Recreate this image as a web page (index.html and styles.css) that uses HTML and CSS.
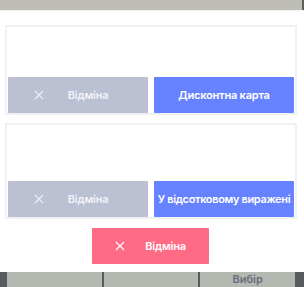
FILE: index.html
```html
<!DOCTYPE html>
<html lang="uk">
<head>
    <meta charset="UTF-8">
    <meta name="viewport" content="width=device-width, initial-scale=1.0">
    <title>Знижка</title>
    <link rel="stylesheet" href="styles.css">
</head>
<body>
    <div class="topbar"></div>
    <div class="sheet">
        <div class="card">
            <div class="card-space"></div>
            <div class="actions">
                <button class="btn btn-muted">
                    <svg class="x-icon" viewBox="0 0 10 10"><path d="M1 1L9 9M9 1L1 9"/></svg>
                    <span>Відміна</span>
                </button>
                <button class="btn btn-primary">Дисконтна карта</button>
            </div>
        </div>
        <div class="card card-tall">
            <div class="card-space"></div>
            <div class="actions">
                <button class="btn btn-muted">
                    <svg class="x-icon" viewBox="0 0 10 10"><path d="M1 1L9 9M9 1L1 9"/></svg>
                    <span>Відміна</span>
                </button>
                <button class="btn btn-primary btn-long">У відсотковому виражені</button>
            </div>
        </div>
        <div class="cancel-row">
            <button class="btn btn-danger">
                <svg class="x-icon" viewBox="0 0 10 10"><path d="M1 1L9 9M9 1L1 9"/></svg>
                <span>Відміна</span>
            </button>
        </div>
    </div>
    <div class="bottombar">
        <div class="tab"></div>
        <div class="tab"></div>
        <div class="tab">Вибір</div>
    </div>
</body>
</html>
```

FILE: styles.css
```css
body {
    margin: 0;
    font-family: 'Inter', 'Noto Sans', sans-serif;
    background: #fff;
    width: 304px;
    height: 287px;
    overflow: hidden;
}
.topbar {
    height: 10px;
    background: #bdbdb5;
    border-right: 2px solid #5a5f60;
    box-shadow: 0 1px 1px rgba(0, 0, 0, 0.06);
}
.sheet {
    padding: 15px 7px 0 5px;
}
.card {
    border: 2px solid #eff0f4;
    padding: 0 1px;
    margin-bottom: 8px;
}
.card-space {
    height: 50px;
}
.card-tall .card-space {
    height: 56px;
}
.actions {
    display: flex;
    gap: 6px;
}
.btn {
    height: 36px;
    border: none;
    border-radius: 1px;
    color: #fff;
    font-family: inherit;
    font-size: 11px;
    font-weight: 600;
    letter-spacing: -0.2px;
    display: flex;
    align-items: center;
    justify-content: center;
    padding: 0;
    white-space: nowrap;
    overflow: hidden;
}
.actions .btn {
    width: 140px;
}
.btn-long {
    letter-spacing: -0.35px;
}
.x-icon {
    width: 10px;
    height: 10px;
    fill: none;
    stroke: #fff;
    stroke-width: 1.1;
}
.btn-muted {
    background: #bcc0d3;
    color: #f2f3f8;
    gap: 24px;
    padding-right: 14px;
}
.btn-muted .x-icon {
    stroke: #eceef5;
}
.btn-primary {
    background: #6682ff;
}
.cancel-row {
    display: flex;
    padding: 1px 0 8px 87px;
}
.btn-danger {
    width: 117px;
    background: #ff6a84;
    gap: 20px;
}
.bottombar {
    height: 15px;
    background: #565c5e;
    display: flex;
    gap: 2px;
    padding: 0 9px 0 7px;
}
.tab {
    flex: 1;
    background: #b5b7b1;
    color: #6a6d79;
    font-size: 11px;
    font-weight: 600;
    text-align: center;
    line-height: 12px;
    padding-top: 1px;
}
```
